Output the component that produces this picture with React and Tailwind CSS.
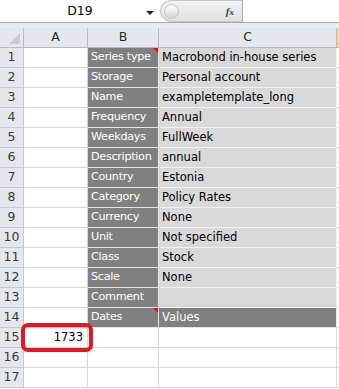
import React from 'react';

const rows = [
  ['Series type', 'Macrobond in-house series', true],
  ['Storage', 'Personal account'],
  ['Name', 'exampletemplate_long'],
  ['Frequency', 'Annual'],
  ['Weekdays', 'FullWeek'],
  ['Description', 'annual'],
  ['Country', 'Estonia'],
  ['Category', 'Policy Rates'],
  ['Currency', 'None'],
  ['Unit', 'Not specified'],
  ['Class', 'Stock'],
  ['Scale', 'None'],
  ['Comment', ''],
];

const font = { fontFamily: '"DejaVu Sans", Verdana, sans-serif' };

// little red comment marker in the top-right corner of a cell
const Marker = () => (
  <span className="absolute right-0 top-0 h-0 w-0 border-l-[5px] border-t-[5px] border-l-transparent border-t-[#ff0000]" />
);

const RowHead = ({ n }) => (
  <div className="flex h-5 items-center justify-center border-b border-r border-[#c5c9cf] bg-[#e4e8ed] text-[12.5px] text-[#3a3a3a]">
    {n}
  </div>
);

const keyCell =
  'relative flex h-5 items-center overflow-hidden whitespace-nowrap border-b border-r border-[#e8e8e8] bg-[#808080] pl-[3px] text-[11.2px] tracking-[-0.3px] text-white';

const App = () => (
  <div className="h-[389px] w-[339px] overflow-hidden bg-white text-[11.5px]" style={font}>
    {/* formula bar */}
    <div className="flex h-[23px] border-b border-[#a7abb0]">
      <div className="relative flex w-[160px] items-center justify-center text-[12.5px] text-black">
        D19
        <span className="absolute left-[146px] top-[11px] h-0 w-0 border-x-[4px] border-t-[4px] border-x-transparent border-t-[#222]" />
      </div>
      <div className="flex w-[82px] items-center rounded-l-full border border-r-0 border-[#c4c8cc] bg-gradient-to-b from-[#f2f3f5] to-[#dde0e4] pl-[3px]">
        <span className="h-[15px] w-[15px] rounded-full border border-[#c0c4c8] bg-gradient-to-b from-[#ffffff] to-[#cfd3d7]" />
        <span className="ml-auto mr-[8px] text-[11px] italic font-bold text-[#444]" style={{ fontFamily: '"Liberation Serif", serif' }}>
          f<span className="text-[9px]">x</span>
        </span>
      </div>
      <div className="flex-1 border-l border-[#a7abb0] bg-white" />
    </div>
    <div className="h-[5px] bg-[#e9ecf0]" />

    {/* sheet */}
    <div className="grid grid-cols-[24px_64px_71px_178px_2px]">
      {/* column headers */}
      <div className="relative h-5 border-b border-r border-[#b8bcc2] bg-[#e4e8ed]">
        <span className="absolute bottom-[3px] right-[3px] h-0 w-0 border-b-[11px] border-l-[11px] border-b-[#c8ccd1] border-l-transparent" />
      </div>
      {['A', 'B', 'C'].map((c) => (
        <div key={c} className="flex h-5 items-center justify-center border-b border-r border-[#b8bcc2] bg-[#e4e8ed] text-[12.5px] text-[#2a2a2a]">
          {c}
        </div>
      ))}
      <div className="h-5 border-b border-[#e8b54a] bg-[#f9d98a]" />

      {rows.map(([k, v, mark], i) => (
        <React.Fragment key={k}>
          <RowHead n={i + 1} />
          <div className="h-5 border-b border-r border-[#d8d8d8]" />
          <div className={keyCell}>
            {k}
            {mark && <Marker />}
          </div>
          <div className="flex h-5 items-center border-b border-r border-[#f2f2f2] bg-[#d9d9d9] pl-[3px] text-black whitespace-nowrap">
            {v}
          </div>
          <div className="h-5 border-b border-[#d8d8d8]" />
        </React.Fragment>
      ))}

      {/* row 14 */}
      <RowHead n={14} />
      <div className="h-5 border-b border-r border-[#d8d8d8]" />
      <div className={keyCell}>
        Dates
        <Marker />
      </div>
      <div className="flex h-5 items-center border-b border-r border-[#e8e8e8] bg-[#808080] pl-[3px] text-white">
        Values
      </div>
      <div className="h-5 border-b border-[#d8d8d8]" />

      {/* row 15 with highlighted value */}
      <RowHead n={15} />
      <div className="relative flex h-5 items-center justify-end border-b border-r border-[#d8d8d8] pr-[4px] text-black">
        1733
        <span className="absolute -left-[3px] -right-[6px] -top-[5px] -bottom-[5px] rounded-[7px] border-[4px] border-[#e8141e]" />
      </div>
      <div className="h-5 border-b border-r border-[#d8d8d8]" />
      <div className="h-5 border-b border-r border-[#d8d8d8]" />
      <div className="h-5 border-b border-[#d8d8d8]" />

      {[16, 17].map((n) => (
        <React.Fragment key={n}>
          <RowHead n={n} />
          <div className="h-5 border-b border-r border-[#d8d8d8]" />
          <div className="h-5 border-b border-r border-[#d8d8d8]" />
          <div className="h-5 border-b border-r border-[#d8d8d8]" />
          <div className="h-5 border-b border-[#d8d8d8]" />
        </React.Fragment>
      ))}
    </div>
  </div>
);

export default App;
